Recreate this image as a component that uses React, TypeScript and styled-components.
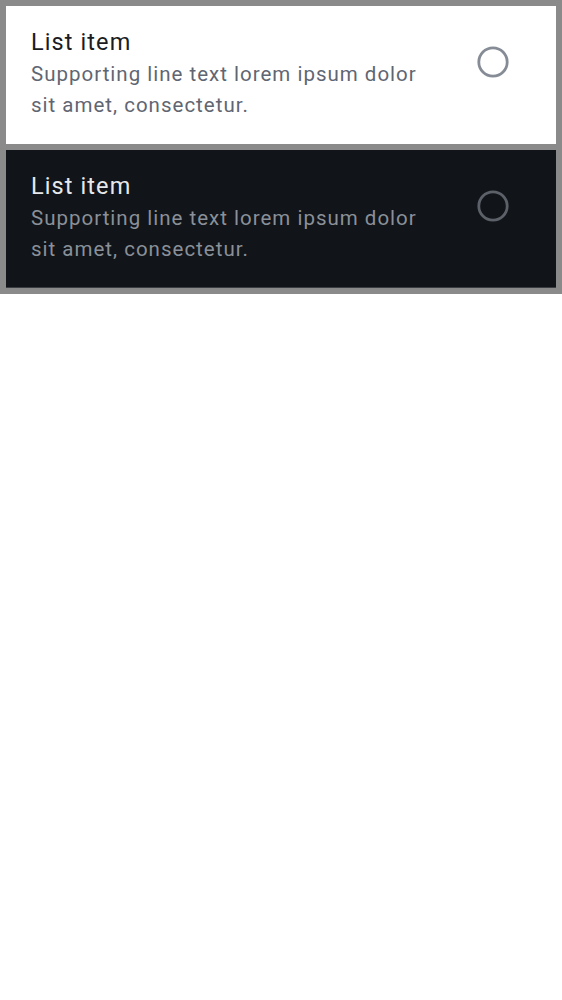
import React from "react";
import styled, { createGlobalStyle } from "styled-components";

const Global = createGlobalStyle`
  html, body { margin: 0; padding: 0; background: #ffffff; }
  body { font-family: Roboto, "Noto Sans", sans-serif; }
`;

type Mode = "light" | "dark";

const palette = {
  light: { bg: "#ffffff", title: "#1b1c1f", body: "#5f6672", radio: "#868c96", divider: "transparent" },
  dark: { bg: "#111418", title: "#e6e8eb", body: "#8a9099", radio: "#5c6169", divider: "#3a3d41" },
};

const Frame = styled.div`
  display: flex;
  flex-direction: column;
  gap: 6px;
  padding: 6px;
  background: #8a8a8a;
`;

const Item = styled.div<{ $mode: Mode }>`
  display: flex;
  align-items: flex-start;
  gap: 40px;
  box-sizing: border-box;
  height: 138px;
  padding: 18px 45px 0 25px;
  background: ${(p) => palette[p.$mode].bg};
  border-bottom: 1px solid ${(p) => palette[p.$mode].divider};
`;

const Texts = styled.div`
  flex: 1;
  display: flex;
  flex-direction: column;
`;

const Title = styled.div<{ $mode: Mode }>`
  font-size: 23.5px;
  line-height: 36px;
  letter-spacing: 1.1px;
  color: ${(p) => palette[p.$mode].title};
`;

const Supporting = styled.div<{ $mode: Mode }>`
  font-size: 20.5px;
  line-height: 31px;
  letter-spacing: 1px;
  color: ${(p) => palette[p.$mode].body};
  margin-top: -1px;
`;

const RadioWrap = styled.div`
  width: 36px;
  height: 36px;
  margin-top: 20px;
  display: flex;
  align-items: center;
  justify-content: center;
`;

const Radio = ({ color }: { color: string }) => (
  <svg width="36" height="36" viewBox="0 0 36 36">
    <circle cx="18" cy="18" r="14.2" fill="none" stroke={color} strokeWidth="2.8" />
  </svg>
);

const ListItem = ({ mode }: { mode: Mode }) => (
  <Item $mode={mode}>
    <Texts>
      <Title $mode={mode}>List item</Title>
      <Supporting $mode={mode}>
        Supporting line text lorem ipsum dolor sit amet, consectetur.
      </Supporting>
    </Texts>
    <RadioWrap>
      <Radio color={palette[mode].radio} />
    </RadioWrap>
  </Item>
);

export default function App() {
  return (
    <>
      <Global />
      <Frame>
        <ListItem mode="light" />
        <ListItem mode="dark" />
      </Frame>
    </>
  );
}
